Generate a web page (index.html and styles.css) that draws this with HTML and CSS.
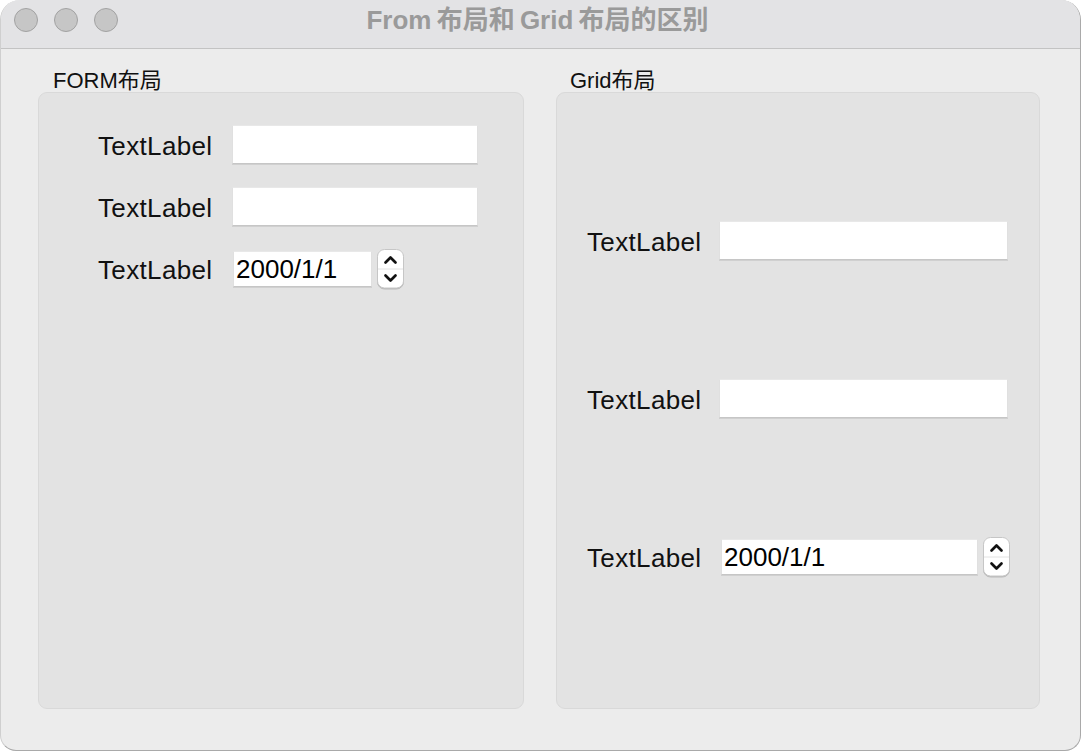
FILE: index.html
```html
<!DOCTYPE html>
<html lang="zh">
<head>
<meta charset="utf-8">
<title>From布局和Grid布局的区别</title>
<link rel="stylesheet" href="styles.css">
</head>
<body>
<div class="window">
  <div class="titlebar">
    <div class="lights">
      <span class="light"></span>
      <span class="light"></span>
      <span class="light"></span>
    </div>
    <div class="title">From 布局和 Grid 布局的区别</div>
    <div></div>
  </div>
  <div class="content">
    <section class="column column-left">
      <div class="group-title">FORM布局</div>
      <div class="box form-box">
        <label class="label">TextLabel</label>
        <input class="field" type="text">
        <label class="label">TextLabel</label>
        <input class="field" type="text">
        <label class="label">TextLabel</label>
        <div class="date-row">
          <input class="field date date-left" type="text" value="2000/1/1">
          <svg class="spinner" width="27" height="40" viewBox="0 0 27 40">
            <rect x="0.5" y="0.5" width="26" height="38.5" rx="7" fill="#fff" stroke="#c6c6c6"/>
            <line x1="1" y1="20" x2="26" y2="20" stroke="#e2e2e2"/>
            <path d="M8.5 13.5 L13.5 8.5 L18.5 13.5" fill="none" stroke="#111" stroke-width="2.7" stroke-linecap="round" stroke-linejoin="round"/>
            <path d="M8.5 26.5 L13.5 31.5 L18.5 26.5" fill="none" stroke="#111" stroke-width="2.7" stroke-linecap="round" stroke-linejoin="round"/>
          </svg>
        </div>
      </div>
    </section>
    <section class="column column-right">
      <div class="group-title">Grid布局</div>
      <div class="box grid-box">
        <label class="label">TextLabel</label>
        <input class="field" type="text">
        <label class="label">TextLabel</label>
        <input class="field" type="text">
        <label class="label">TextLabel</label>
        <div class="date-row">
          <input class="field date date-right" type="text" value="2000/1/1">
          <svg class="spinner" width="27" height="40" viewBox="0 0 27 40">
            <rect x="0.5" y="0.5" width="26" height="38.5" rx="7" fill="#fff" stroke="#c6c6c6"/>
            <line x1="1" y1="20" x2="26" y2="20" stroke="#e2e2e2"/>
            <path d="M8.5 13.5 L13.5 8.5 L18.5 13.5" fill="none" stroke="#111" stroke-width="2.7" stroke-linecap="round" stroke-linejoin="round"/>
            <path d="M8.5 26.5 L13.5 31.5 L18.5 26.5" fill="none" stroke="#111" stroke-width="2.7" stroke-linecap="round" stroke-linejoin="round"/>
          </svg>
        </div>
      </div>
    </section>
  </div>
</div>
</body>
</html>
```

FILE: styles.css
```css
* { box-sizing: border-box; }

html, body {
  margin: 0;
  padding: 0;
  background: #ffffff;
}

body {
  width: 1082px;
  height: 752px;
  overflow: hidden;
  font-family: "Liberation Sans", "Noto Sans CJK SC", sans-serif;
  color: #111;
}

.window {
  width: 1081px;
  height: 751px;
  background: #ececec;
  border-right: 1px solid #a9a9a9;
  border-bottom: 1px solid #a9a9a9;
  border-left: 1px solid #cfcfcf;
  border-radius: 20px 20px 16px 16px;
  overflow: hidden;
}

.titlebar {
  height: 49px;
  background: #e3e3e5;
  border-bottom: 1px solid #c3c3c3;
  display: grid;
  grid-template-columns: 1fr auto 1fr;
  align-items: start;
}

.lights {
  display: flex;
  gap: 16px;
  padding: 8px 0 0 13px;
}

.light {
  width: 24px;
  height: 24px;
  border-radius: 50%;
  background: #c6c6c6;
  border: 1px solid #a2a2a2;
}

.title {
  padding-top: 7px;
  font-size: 26px;
  line-height: 26px;
  font-weight: bold;
  color: #9a9a9a;
  white-space: nowrap;
  word-spacing: -2px;
  margin-left: -6px;
}

.content {
  display: flex;
  gap: 32px;
  padding: 18px 0 0 37px;
}

.column {
  display: flex;
  flex-direction: column;
}

.column-left { width: 486px; }
.column-right { width: 484px; }

.group-title {
  height: 25px;
  line-height: 24px;
  padding-top: 2px;
  font-size: 22px;
  padding-left: 15px;
  color: #111;
}

.column-right .group-title { padding-left: 14px; }

.box {
  height: 617px;
  background: #e3e3e3;
  border: 1px solid #d9d9d9;
  border-radius: 9px;
  display: grid;
  align-content: start;
  align-items: center;
}

.form-box {
  padding: 32px 0 0 59px;
  grid-template-columns: 114px 246px;
  column-gap: 20px;
  row-gap: 23px;
}

.grid-box {
  padding: 128px 0 0 30px;
  grid-template-columns: 114px 289px;
  column-gap: 18px;
  row-gap: 119px;
}

.label {
  font-size: 26px;
  line-height: 39px;
  height: 39px;
  padding-top: 2px;
  text-align: right;
  white-space: nowrap;
  letter-spacing: 0.35px;
  color: #111;
}

.field {
  display: block;
  height: 39px;
  width: 100%;
  margin: 0;
  padding: 0 3px;
  background: #fff;
  border: 1px solid #e0e0e0;
  border-top-color: #e8e8e8;
  border-bottom: 1px solid #c6c6c6;
  box-shadow: 0 1px 0 #d0d0d0;
  border-radius: 0;
  outline: none;
  font-family: "Liberation Sans", "Noto Sans CJK SC", sans-serif;
  font-size: 26px;
  color: #000;
}

.date-row {
  display: flex;
  align-items: center;
  gap: 5px;
  height: 39px;
}

.date {
  height: 36px;
  padding: 2px 2px 0;
}

.date-left { width: 139px; margin-left: 1px; }
.date-right { width: 257px; margin-left: 2px; }

.spinner {
  display: block;
  flex: none;
  filter: drop-shadow(0 1px 0.5px rgba(0,0,0,0.18));
}
```
